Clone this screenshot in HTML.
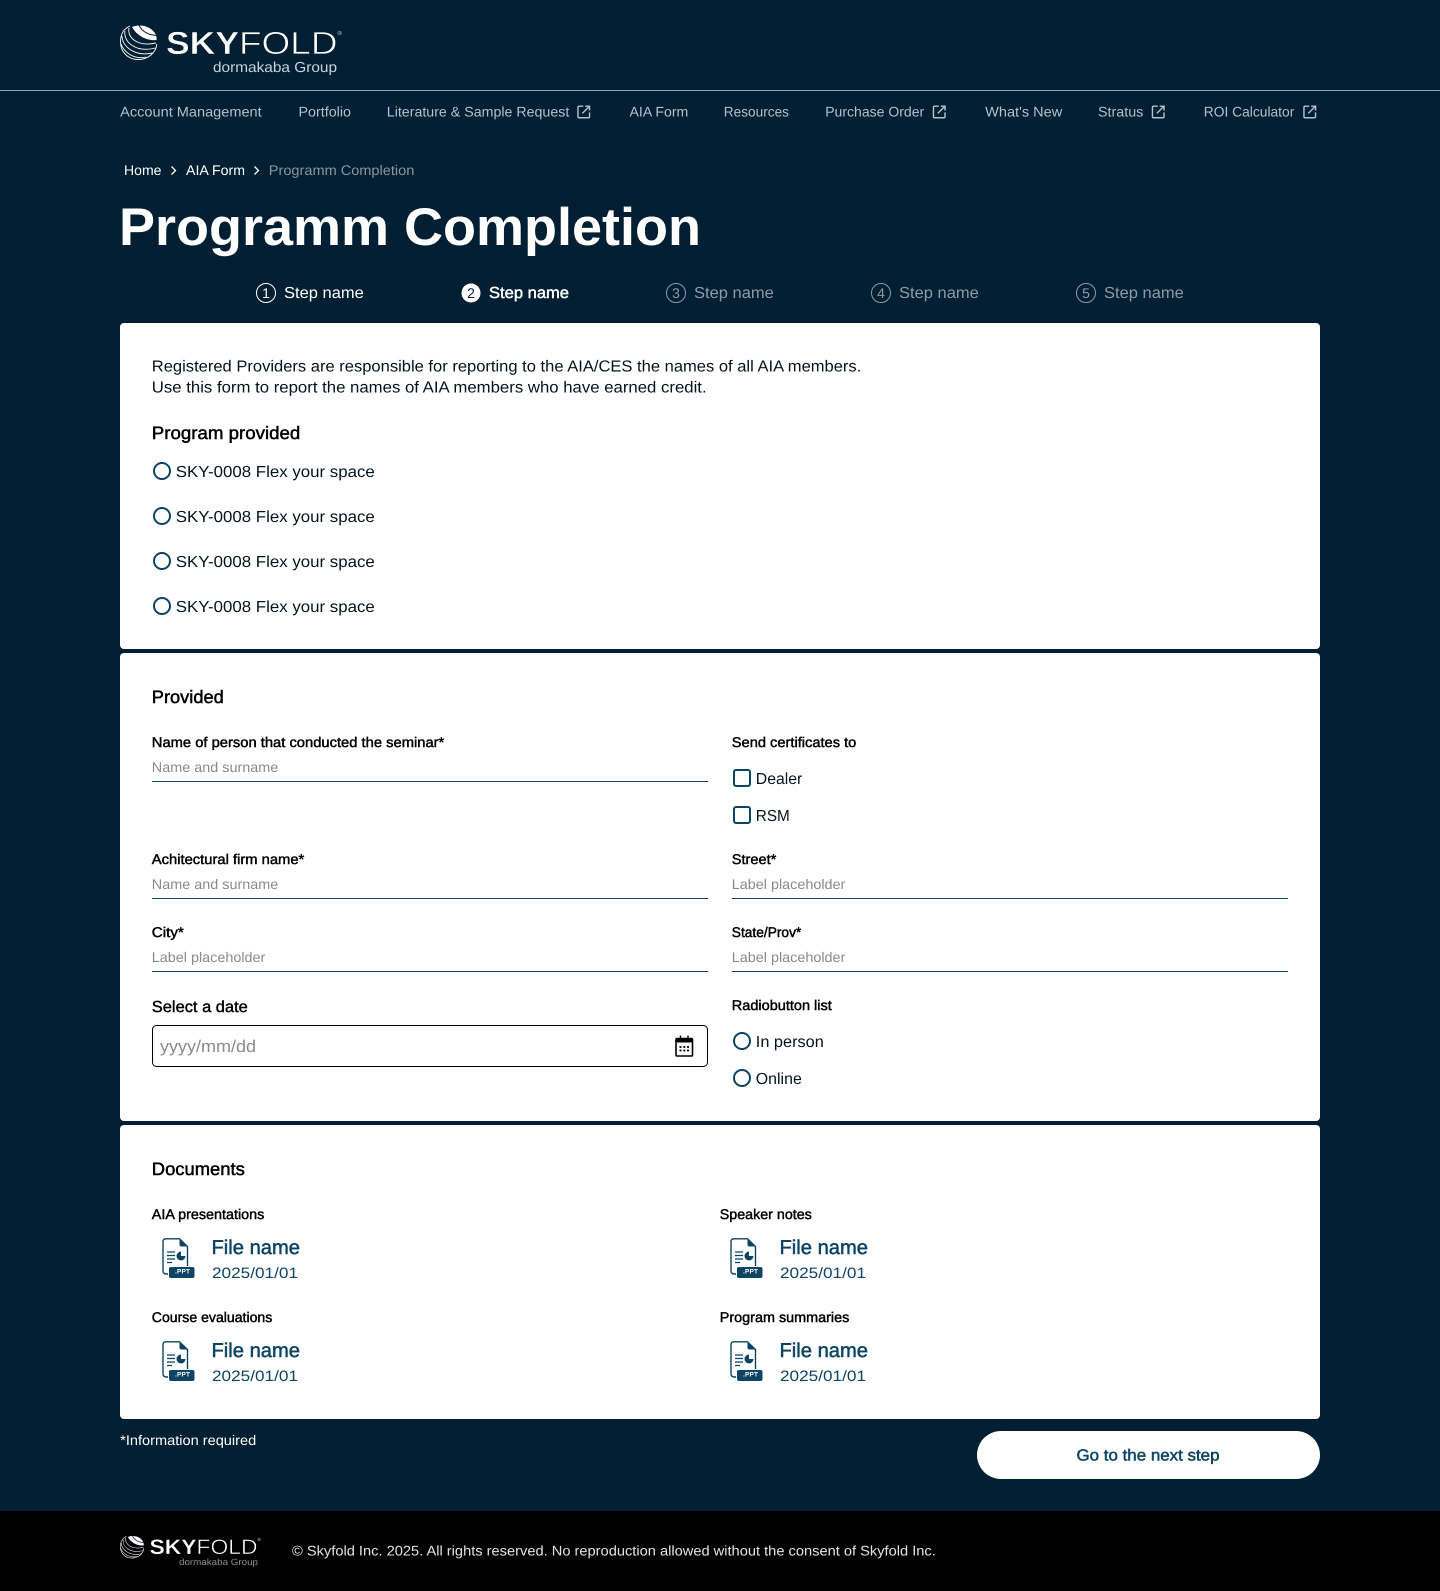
<!DOCTYPE html>
<html lang="en"><head><meta charset="utf-8"><title>Programm Completion</title>
<style>
html,body{margin:0;padding:0;background:#011f32}
svg{display:block}
text{font-family:"Liberation Sans",sans-serif;text-rendering:geometricPrecision;white-space:pre}
.nav{font-size:14px;fill:#b2c1cc}
.crumb{font-size:14px;fill:#fff}
.step{font-size:16px;fill:#8d9aa5}
.body{font-size:16px;fill:#06131b}
.h{font-size:18px;fill:#000;stroke:#000;stroke-width:.5px}
.lab{font-size:14px;fill:#000;stroke:#000;stroke-width:.45px}
.ph{font-size:14px;fill:#8a8a8a}
.fn{font-size:20px;fill:#0d4463;stroke:#0d4463;stroke-width:.5px}
.fd{font-size:15px;fill:#0d4463}
.ico{fill:none;stroke:#b2c1cc;stroke-width:1.5}
.r{fill:none;stroke:#0d4463;stroke-width:2}
.ppt{font-size:6.5px;font-weight:700;fill:#fff}
</style></head><body>
<svg xmlns="http://www.w3.org/2000/svg" width="1440" height="1591" viewBox="0 0 1440 1591">
<defs>
<symbol id="globe" viewBox="0 0 37 36" overflow="visible">
<g fill="none" stroke="#fff" stroke-width=".9">
<path d="M10 2C3 5 .5 11 .5 18C.5 28 8 35.500 18 35.500C28 35.500 36 29 36.800 20"/>
<path d="M9 4C7 14 18 23 36 19"/>
<path d="M5 7C3 18 16 29 35.500 24"/>
<path d="M2 12C2 22 14 33 33 29"/>
<path d="M1 20C4 28 14 36 26 33"/>
</g>
<path d="M12 3C20-.5 31 2 35.500 10C36.500 12 36.800 14 36.500 16C27 17 17 12 12 3Z" fill="#fff"/>
<path d="M19 1.500C22 7 28 11 36.500 11.500" fill="none" stroke="#011f32" stroke-width="1"/>
</symbol>
<symbol id="ext" viewBox="0 0 14 14" overflow="visible">
<path class="ico" d="M6.500 1H2.200A1.200 1.200 0 0 0 1 2.200V11.800A1.200 1.200 0 0 0 2.200 13H11.800A1.200 1.200 0 0 0 13 11.800V7.500"/>
<path class="ico" d="M5.500 8.500L13 1M8.500 1H13V5.500"/>
</symbol>
<symbol id="doc" viewBox="0 0 32 40" overflow="visible">
<path d="M6 36H4A3 3 0 0 1 1 33V3A3 3 0 0 1 4 .8H17.500L25.500 8.500V28" fill="none" stroke="#0d4463" stroke-width="1.400"/>
<path d="M17.500 .8V6.500A2 2 0 0 0 19.500 8.500H25.500Z" fill="#0d4463"/>
<path d="M5 14H13M5 17.500H13M5 21H13M5 24.500H10" stroke="#0d4463" stroke-width="1.200"/>
<circle cx="19" cy="18" r="4.500" fill="#0d4463"/>
<path d="M19 18V13.500A4.500 4.500 0 0 1 23.500 18Z" fill="#fff"/>
<rect x="7" y="29" width="25.500" height="11" rx="2" fill="#0d4463"/>
</symbol>
</defs>

<rect width="1440" height="1591" fill="#011f32"/>

<!-- header -->
<use href="#globe" x="120" y="24" width="37" height="36"/>
<text x="166" y="54" font-size="32" font-weight="700" fill="#fff" stroke="#011f32" stroke-width=".5" textLength="73" lengthAdjust="spacingAndGlyphs">SKY</text>
<text x="239" y="54" font-size="32" fill="#fff" stroke="#011f32" stroke-width=".7" textLength="98.500" lengthAdjust="spacingAndGlyphs">FOLD</text>
<text x="337.500" y="35" font-size="6" fill="#c8d3db">®</text>
<text x="213" y="72" font-size="14.500" fill="#c8d3db" textLength="124" lengthAdjust="spacingAndGlyphs">dormakaba Group</text>
<rect x="0" y="90" width="1440" height="1" fill="#8ea8ba"/>

<!-- nav -->
<text class="nav" x="120.200" y="116.700" textLength="141.500" lengthAdjust="spacingAndGlyphs">Account Management</text>
<text class="nav" x="298.500" y="116.700" textLength="52.500" lengthAdjust="spacingAndGlyphs">Portfolio</text>
<text class="nav" x="386.800" y="116.700" textLength="182.500" lengthAdjust="spacingAndGlyphs">Literature &amp; Sample Request</text>
<use href="#ext" x="577" y="105.200" width="13.500" height="13.500"/>
<text class="nav" x="629.500" y="116.700" textLength="58.800" lengthAdjust="spacingAndGlyphs">AIA Form</text>
<text class="nav" x="723.800" y="116.700" textLength="65.200" lengthAdjust="spacingAndGlyphs">Resources</text>
<text class="nav" x="825.200" y="116.700" textLength="99" lengthAdjust="spacingAndGlyphs">Purchase Order</text>
<use href="#ext" x="932.500" y="105.200" width="13.500" height="13.500"/>
<text class="nav" x="985.200" y="116.700" textLength="77" lengthAdjust="spacingAndGlyphs">What's New</text>
<text class="nav" x="1098" y="116.700" textLength="45.300" lengthAdjust="spacingAndGlyphs">Stratus</text>
<use href="#ext" x="1151.500" y="105.200" width="13.500" height="13.500"/>
<text class="nav" x="1203.800" y="116.700" textLength="90.500" lengthAdjust="spacingAndGlyphs">ROI Calculator</text>
<use href="#ext" x="1303" y="105.200" width="13.500" height="13.500"/>

<!-- breadcrumb -->
<text class="crumb" x="124" y="175" textLength="37.500" lengthAdjust="spacingAndGlyphs">Home</text>
<path d="M171.500 166.500L175.500 170.500L171.500 174.500" fill="none" stroke="#fff" stroke-width="1.300"/>
<text class="crumb" x="186" y="175" textLength="59" lengthAdjust="spacingAndGlyphs">AIA Form</text>
<path d="M254.500 166.500L258.500 170.500L254.500 174.500" fill="none" stroke="#fff" stroke-width="1.300"/>
<text class="crumb" x="268.800" y="175" textLength="145.500" lengthAdjust="spacingAndGlyphs" style="fill:#8a97a2">Programm Completion</text>

<!-- title -->
<text x="119" y="245" font-size="53" font-weight="700" fill="#fff" textLength="582" lengthAdjust="spacingAndGlyphs">Programm Completion</text>

<!-- stepper -->
<circle cx="266" cy="293" r="9.500" fill="none" stroke="#fff" stroke-width="1"/>
<text x="266" y="298" font-size="14" fill="#fff" text-anchor="middle">1</text>
<text class="step" x="284" y="298" textLength="79.800" lengthAdjust="spacingAndGlyphs" style="fill:#fff">Step name</text>
<circle cx="471" cy="293" r="9.500" fill="#fff"/>
<text x="471" y="298" font-size="14" fill="#011f32" text-anchor="middle">2</text>
<text class="step" x="489" y="298" textLength="80" lengthAdjust="spacingAndGlyphs" style="fill:#fff;stroke:#fff;stroke-width:.45px">Step name</text>
<circle cx="676" cy="293" r="9.500" fill="none" stroke="#8d9aa5" stroke-width="1"/>
<text x="676" y="298" font-size="14" fill="#8d9aa5" text-anchor="middle">3</text>
<text class="step" x="694" y="298" textLength="79.800" lengthAdjust="spacingAndGlyphs">Step name</text>
<circle cx="881" cy="293" r="9.500" fill="none" stroke="#8d9aa5" stroke-width="1"/>
<text x="881" y="298" font-size="14" fill="#8d9aa5" text-anchor="middle">4</text>
<text class="step" x="899" y="298" textLength="79.800" lengthAdjust="spacingAndGlyphs">Step name</text>
<circle cx="1086" cy="293" r="9.500" fill="none" stroke="#8d9aa5" stroke-width="1"/>
<text x="1086" y="298" font-size="14" fill="#8d9aa5" text-anchor="middle">5</text>
<text class="step" x="1104" y="298" textLength="79.800" lengthAdjust="spacingAndGlyphs">Step name</text>

<!-- cards -->
<rect x="120" y="323" width="1200" height="326" rx="4" fill="#fff"/>
<rect x="120" y="653" width="1200" height="468" rx="4" fill="#fff"/>
<rect x="120" y="1125" width="1200" height="294" rx="4" fill="#fff"/>

<!-- card 1 -->
<text class="body" x="151.800" y="371.500" textLength="709.500" lengthAdjust="spacingAndGlyphs">Registered Providers are responsible for reporting to the AIA/CES the names of all AIA members.</text>
<text class="body" x="151.800" y="392.500" textLength="554.800" lengthAdjust="spacingAndGlyphs">Use this form to report the names of AIA members who have earned credit.</text>
<text class="h" x="151.800" y="439" textLength="148.500" lengthAdjust="spacingAndGlyphs">Program provided</text>
<circle class="r" cx="162" cy="471" r="8"/>
<text class="body" x="175.800" y="477.200" textLength="199" lengthAdjust="spacingAndGlyphs">SKY-0008 Flex your space</text>
<circle class="r" cx="162" cy="516" r="8"/>
<text class="body" x="175.800" y="522.200" textLength="199" lengthAdjust="spacingAndGlyphs">SKY-0008 Flex your space</text>
<circle class="r" cx="162" cy="561" r="8"/>
<text class="body" x="175.800" y="567.200" textLength="199" lengthAdjust="spacingAndGlyphs">SKY-0008 Flex your space</text>
<circle class="r" cx="162" cy="606" r="8"/>
<text class="body" x="175.800" y="612.200" textLength="199" lengthAdjust="spacingAndGlyphs">SKY-0008 Flex your space</text>

<!-- card 2 left -->
<text class="h" x="151.800" y="703" textLength="72" lengthAdjust="spacingAndGlyphs">Provided</text>
<text class="lab" x="151.800" y="747" textLength="292.500" lengthAdjust="spacingAndGlyphs">Name of person that conducted the seminar*</text>
<text class="ph" x="151.800" y="772" textLength="126.500" lengthAdjust="spacingAndGlyphs">Name and surname</text>
<rect x="152" y="781" width="556" height="1" fill="#0d4463"/>
<text class="lab" x="151.800" y="864" textLength="152.500" lengthAdjust="spacingAndGlyphs">Achitectural firm name*</text>
<text class="ph" x="151.800" y="889" textLength="126.500" lengthAdjust="spacingAndGlyphs">Name and surname</text>
<rect x="152" y="898" width="556" height="1" fill="#0d4463"/>
<text class="lab" x="151.800" y="937" textLength="32" lengthAdjust="spacingAndGlyphs">City*</text>
<text class="ph" x="151.800" y="962" textLength="113.500" lengthAdjust="spacingAndGlyphs">Label placeholder</text>
<rect x="152" y="971" width="556" height="1" fill="#0d4463"/>
<text x="151.800" y="1012" font-size="16" fill="#000" stroke="#000" stroke-width=".4" textLength="96" lengthAdjust="spacingAndGlyphs">Select a date</text>
<rect x="152.500" y="1025.500" width="555" height="41" rx="4" fill="#fff" stroke="#000" stroke-width="1"/>
<text x="160" y="1052" font-size="17" fill="#8a8a8a" textLength="96" lengthAdjust="spacingAndGlyphs">yyyy/mm/dd</text>
<g>
<rect x="676" y="1038.500" width="16.500" height="17.500" rx="1" fill="none" stroke="#000" stroke-width="1.600"/>
<rect x="676" y="1038.500" width="16.500" height="4" fill="#000"/>
<path d="M680.500 1035.500V1039M688 1035.500V1039" stroke="#000" stroke-width="1.400"/>
<path d="M679.500 1047H681.500M683.300 1047H685.300M687 1047H689M679.500 1050.500H681.500M683.300 1050.500H685.300M687 1050.500H689" stroke="#000" stroke-width="1.800"/>
</g>

<!-- card 2 right -->
<text class="lab" x="731.800" y="747" textLength="124.500" lengthAdjust="spacingAndGlyphs">Send certificates to</text>
<rect class="r" x="734" y="770" width="16" height="16" rx="2"/>
<text class="body" x="755.800" y="784" textLength="46.500" lengthAdjust="spacingAndGlyphs">Dealer</text>
<rect class="r" x="734" y="807" width="16" height="16" rx="2"/>
<text class="body" x="755.800" y="821" textLength="34" lengthAdjust="spacingAndGlyphs">RSM</text>
<text class="lab" x="731.800" y="864" textLength="44.500" lengthAdjust="spacingAndGlyphs">Street*</text>
<text class="ph" x="731.800" y="889" textLength="113.500" lengthAdjust="spacingAndGlyphs">Label placeholder</text>
<rect x="732" y="898" width="556" height="1" fill="#0d4463"/>
<text class="lab" x="731.800" y="937" textLength="69.500" lengthAdjust="spacingAndGlyphs">State/Prov*</text>
<text class="ph" x="731.800" y="962" textLength="113.500" lengthAdjust="spacingAndGlyphs">Label placeholder</text>
<rect x="732" y="971" width="556" height="1" fill="#0d4463"/>
<text class="lab" x="731.800" y="1010" textLength="100" lengthAdjust="spacingAndGlyphs">Radiobutton list</text>
<circle class="r" cx="742" cy="1041" r="8"/>
<text class="body" x="755.800" y="1047" textLength="68" lengthAdjust="spacingAndGlyphs">In person</text>
<circle class="r" cx="742" cy="1078" r="8"/>
<text class="body" x="755.800" y="1084" textLength="46" lengthAdjust="spacingAndGlyphs">Online</text>

<!-- card 3 -->
<text class="h" x="151.800" y="1175" textLength="93" lengthAdjust="spacingAndGlyphs">Documents</text>

<text class="lab" x="151.800" y="1219" textLength="112.500" lengthAdjust="spacingAndGlyphs">AIA presentations</text>
<use href="#doc" x="162" y="1238" width="32" height="40"/>
<text class="ppt" x="175" y="1273.500" textLength="15">.PPT</text>
<text class="fn" x="211.500" y="1254" textLength="88.500" lengthAdjust="spacingAndGlyphs">File name</text>
<text class="fd" x="212" y="1278" textLength="86" lengthAdjust="spacingAndGlyphs">2025/01/01</text>

<text class="lab" x="719.800" y="1219" textLength="92" lengthAdjust="spacingAndGlyphs">Speaker notes</text>
<use href="#doc" x="730" y="1238" width="32" height="40"/>
<text class="ppt" x="743" y="1273.500" textLength="15">.PPT</text>
<text class="fn" x="779.500" y="1254" textLength="88.500" lengthAdjust="spacingAndGlyphs">File name</text>
<text class="fd" x="780" y="1278" textLength="86" lengthAdjust="spacingAndGlyphs">2025/01/01</text>

<text class="lab" x="151.800" y="1322" textLength="120.500" lengthAdjust="spacingAndGlyphs">Course evaluations</text>
<use href="#doc" x="162" y="1341" width="32" height="40"/>
<text class="ppt" x="175" y="1376.500" textLength="15">.PPT</text>
<text class="fn" x="211.500" y="1357" textLength="88.500" lengthAdjust="spacingAndGlyphs">File name</text>
<text class="fd" x="212" y="1381" textLength="86" lengthAdjust="spacingAndGlyphs">2025/01/01</text>

<text class="lab" x="719.800" y="1322" textLength="129.500" lengthAdjust="spacingAndGlyphs">Program summaries</text>
<use href="#doc" x="730" y="1341" width="32" height="40"/>
<text class="ppt" x="743" y="1376.500" textLength="15">.PPT</text>
<text class="fn" x="779.500" y="1357" textLength="88.500" lengthAdjust="spacingAndGlyphs">File name</text>
<text class="fd" x="780" y="1381" textLength="86" lengthAdjust="spacingAndGlyphs">2025/01/01</text>

<!-- bottom -->
<text x="120.200" y="1445" font-size="14" fill="#fff" textLength="136" lengthAdjust="spacingAndGlyphs">*Information required</text>
<rect x="977" y="1431" width="343" height="48" rx="24" fill="#fff"/>
<text x="1076.500" y="1460.500" font-size="16" fill="#0d4463" stroke="#0d4463" stroke-width=".5" textLength="143" lengthAdjust="spacingAndGlyphs">Go to the next step</text>

<!-- footer -->
<rect x="0" y="1511" width="1440" height="80" fill="#000"/>
<use href="#globe" x="120" y="1535" width="24" height="23.500"/>
<text x="149.500" y="1554" font-size="21" font-weight="700" fill="#fff" stroke="#000" stroke-width=".3" textLength="47" lengthAdjust="spacingAndGlyphs">SKY</text>
<text x="196.500" y="1554" font-size="21" fill="#fff" stroke="#000" stroke-width=".5" textLength="61" lengthAdjust="spacingAndGlyphs">FOLD</text>
<text x="257.500" y="1541" font-size="4.500" fill="#c8d3db">®</text>
<text x="179" y="1565" font-size="9" fill="#8a8f93" textLength="79" lengthAdjust="spacingAndGlyphs">dormakaba Group</text>
<text x="292" y="1555.500" font-size="14" fill="#e3e3e3" textLength="643.800" lengthAdjust="spacingAndGlyphs">© Skyfold Inc. 2025. All rights reserved. No reproduction allowed without the consent of Skyfold Inc.</text>
</svg>
</body></html>
